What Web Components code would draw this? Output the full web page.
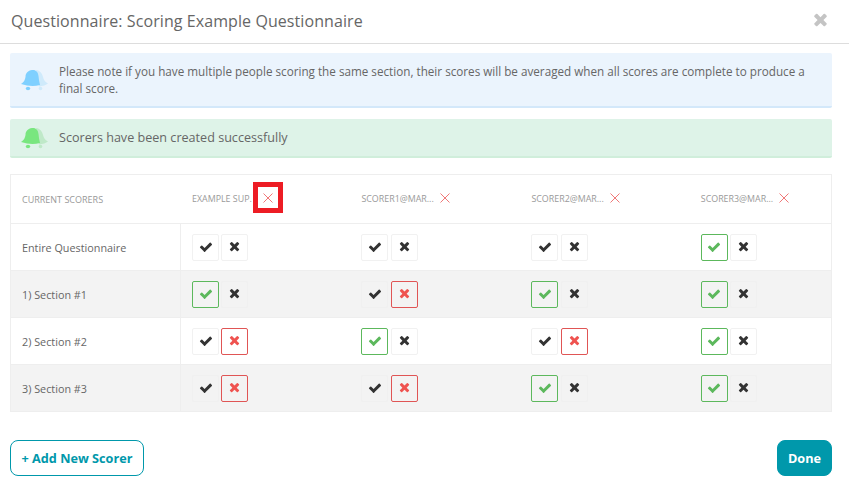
<!DOCTYPE html>
<html>
<head>
<meta charset="utf-8">
<title>Questionnaire</title>
<style>
  html, body { margin: 0; padding: 0; background: #fff; }
  body { font-family: "Open Sans", sans-serif; color: #555; }
</style>
</head>
<body>
<scorer-modal heading="Questionnaire: Scoring Example Questionnaire">
  <notice-box tone="info">Please note if you have multiple people scoring the same section, their scores will be averaged when all scores are complete to produce a final score.</notice-box>
  <notice-box tone="success">Scorers have been created successfully</notice-box>
  <scorer-table></scorer-table>
  <action-button slot="footer" kind="outline">+ Add New Scorer</action-button>
  <action-button slot="footer" kind="solid">Done</action-button>
</scorer-modal>

<script>
const CHECK = "M1671 566q0 40-28 68l-724 724-136 136q-28 28-68 28t-68-28l-136-136-362-362q-28-28-28-68t28-68l136-136q28-28 68-28t68 28l294 295 656-657q28-28 68-28t68 28l136 136q28 28 28 68z";
const TIMES = "M1298 1214q0 40-28 68l-136 136q-28 28-68 28t-68-28l-294-294-294 294q-28 28-68 28t-68-28l-136-136q-28-28-28-68t28-68l294-294-294-294q-28-28-28-68t28-68l136-136q28-28 68-28t68 28l294 294 294-294q28-28 68-28t68 28l136 136q28 28 28 68t-28 68l-294 294 294 294q28 28 28 68z";

class ScorerModal extends HTMLElement {
  constructor() {
    super();
    this.shadowDOM = this.attachShadow({ mode: "open" });
  }

  connectedCallback() {
    this.shadowDOM.innerHTML = `
      <style>
        :host { display: block; width: 849px; height: 489px; box-sizing: border-box; overflow: hidden; }
        header {
          height: 41px;
          border-bottom: 1px solid #ddd;
          display: flex;
          align-items: center;
          justify-content: space-between;
          padding: 0 21px 2px 11px;
        }
        h1 { margin: 0; font-size: 16px; font-weight: 400; color: #666; letter-spacing: .08px; }
        svg { width: 15px; height: 19px; fill: #c4c4c4; display: block; }
        main { padding: 9px 17px 0 10px; display: flex; flex-direction: column; }
        footer { padding: 28px 17px 0 10px; display: flex; justify-content: space-between; align-items: flex-start; }
      </style>
      <header>
        <h1>${this.getAttribute("heading")}</h1>
        <svg viewBox="0 0 1408 1792"><path d="${TIMES}"/></svg>
      </header>
      <main><slot></slot></main>
      <footer><slot name="footer"></slot></footer>
    `;
  }
}

class NoticeBox extends HTMLElement {
  constructor() {
    super();
    this.shadowDOM = this.attachShadow({ mode: "open" });
  }

  connectedCallback() {
    const info = this.getAttribute("tone") === "info";
    const dark = info ? "#7fd0ff" : "#79e67f";
    const light = info ? "#cfeafb" : "#bfe9c8";
    this.shadowDOM.innerHTML = `
      <style>
        :host {
          display: flex;
          align-items: center;
          box-sizing: border-box;
          border-radius: 2px;
          border-bottom: 2px solid ${info ? "#d3e8fa" : "#d0eedb"};
          background: ${info ? "#ebf4fd" : "#def3e8"};
          padding: 0 15px 0 11px;
          height: ${info ? 55 : 39}px;
          margin-bottom: ${info ? 11 : 16}px;
          font-size: ${info ? 11.7 : 12.6}px;
          line-height: 17px;
          color: #666;
        }
        svg { width: 27px; height: 24px; flex: none; margin-right: 11px; }
      </style>
      <svg viewBox="0 0 27 24">
        <g fill="${light}">
          <path d="M15 2c4 .5 6 3 7 7 .7 3 2 5 5 6.500-2 1.500-5 2.500-9 3z"/>
          <circle cx="19.500" cy="20.500" r="1.800"/>
        </g>
        <g fill="${dark}">
          <path d="M11 2c4-.5 6 2 6.500 6 .3 3 .7 6 1.500 9-6 1.500-12 1.200-19-1 3-2 4-4 4.500-7C4.500 5 7 2.500 11 2z"/>
          <ellipse cx="7" cy="20.500" rx="2.200" ry="1.800"/>
        </g>
      </svg>
      <div><slot></slot></div>
    `;
  }
}

class ScoreToggle extends HTMLElement {
  constructor() {
    super();
    this.shadowDOM = this.attachShadow({ mode: "open" });
  }

  connectedCallback() {
    const choice = this.getAttribute("choice");
    this.shadowDOM.innerHTML = `
      <style>
        :host { display: flex; gap: 2.45px; }
        span {
          width: 27px;
          height: 27px;
          box-sizing: border-box;
          border: 1px solid var(--idle-border, #f1f1f1);
          border-radius: 2px;
          display: flex;
          align-items: center;
          justify-content: center;
          fill: #333;
        }
        .yes { border-color: #5cb85c; fill: #5cb85c; }
        .no { border-color: #e05555; fill: #ef5350; }
        svg { width: 14px; height: 14px; display: block; }
        .x { width: 11px; }
      </style>
      <span class="${choice === "yes" ? "yes" : ""}"><svg viewBox="0 0 1792 1792"><path d="${CHECK}"/></svg></span>
      <span class="${choice === "no" ? "no" : ""}"><svg class="x" viewBox="0 0 1408 1792"><path d="${TIMES}"/></svg></span>
    `;
  }
}

class ScorerTable extends HTMLElement {
  constructor() {
    super();
    this.shadowDOM = this.attachShadow({ mode: "open" });
  }

  connectedCallback() {
    const scorers = ["Example Sup.", "scorer1@mar...", "scorer2@mar...", "scorer3@mar..."];
    const rows = [
      ["Entire Questionnaire", "", "", "", "yes"],
      ["1) Section #1", "yes", "no", "yes", "yes"],
      ["2) Section #2", "no", "yes", "no", "yes"],
      ["3) Section #3", "no", "no", "yes", "yes"],
    ];
    const head = scorers.map((name, i) => `
      <div class="who">
        <span>${name}</span>
        <button class="${i === 0 ? "marked" : ""}" aria-label="Remove">
          <svg viewBox="0 0 10 10"><path d="M.5.5l9 9M9.5.5l-9 9"/></svg>
        </button>
      </div>`).join("");
    const body = rows.map((row, i) => `
      <div class="row ${i % 2 ? "alt" : ""}">
        <div class="name">${row[0]}</div>
        ${row.slice(1).map((c) => `<div class="cell"><score-toggle choice="${c}"></score-toggle></div>`).join("")}
      </div>`).join("");
    this.shadowDOM.innerHTML = `
      <style>
        :host {
          display: block;
          border: 1px solid #eee;
          font-size: 10.8px;
          color: #666;
        }
        .row { display: grid; grid-template-columns: 170px 169.4px 170px 169.4px 1fr; border-top: 1px solid #eee; height: 46px; }
        .alt { background: #f3f3f3; --idle-border: #f0f0f0; }
        .head { border-top: 0; height: 48px; }
        .title { padding-left: 11px; display: flex; align-items: center; font-size: 9px; color: #999; text-transform: uppercase; padding-top: 1px; box-sizing: border-box; }
        .who { display: flex; align-items: center; padding-left: 11px; font-size: 8.9px; color: #9a9a9a; text-transform: uppercase; gap: 6px; padding-bottom: 2px; }
        button { all: unset; display: block; position: relative; width: 10px; height: 10px; }
        button svg { display: block; width: 10px; height: 10px; fill: none; stroke: #f07878; stroke-width: 1; }
        .marked { margin-left: 5px; }
        .marked::after {
          content: "";
          position: absolute;
          left: -10px;
          top: -11px;
          width: 20px;
          height: 21px;
          border: 5px solid #ed1c24;
        }
        .name { padding-left: 11px; display: flex; align-items: center; border-right: 1px solid #eee; }
        .cell { padding-left: 11px; display: flex; align-items: center; }
      </style>
      <div class="row head"><div class="title">Current Scorers</div>${head}</div>
      ${body}
    `;
  }
}

class ActionButton extends HTMLElement {
  constructor() {
    super();
    this.shadowDOM = this.attachShadow({ mode: "open" });
  }

  connectedCallback() {
    const solid = this.getAttribute("kind") === "solid";
    this.shadowDOM.innerHTML = `
      <style>
        :host {
          display: inline-flex;
          align-items: center;
          justify-content: center;
          box-sizing: border-box;
          height: 36px;
          width: ${solid ? 55 : 134}px;
          border: 1px solid #0098ab;
          border-radius: 8px;
          background: ${solid ? "#0098ab" : "#fff"};
          color: ${solid ? "#fff" : "#0098ab"};
          font-size: 12.7px;
          font-weight: 700;
          padding-bottom: 1px;
        }
      </style>
      <slot></slot>
    `;
  }
}

customElements.define("scorer-modal", ScorerModal);
customElements.define("notice-box", NoticeBox);
customElements.define("score-toggle", ScoreToggle);
customElements.define("scorer-table", ScorerTable);
customElements.define("action-button", ActionButton);
</script>
</body>
</html>
